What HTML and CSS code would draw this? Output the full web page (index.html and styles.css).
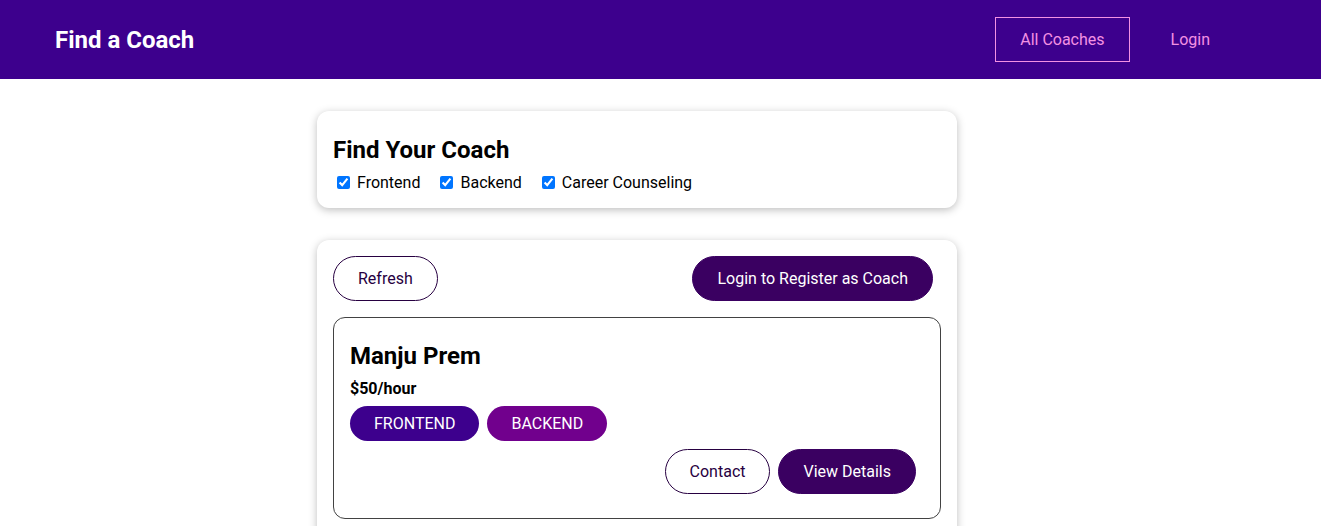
FILE: index.html
```html
<!DOCTYPE html>
<html lang="en">
<head>
<meta charset="utf-8">
<title>Find a Coach</title>
<link rel="stylesheet" href="styles.css">
</head>
<body>
<header class="site-header">
  <nav class="nav">
    <h1 class="brand"><a href="#" class="brand-link">Find a Coach</a></h1>
    <ul class="nav-list">
      <li class="nav-item"><a href="#" class="nav-link active">All Coaches</a></li>
      <li class="nav-item"><a href="#" class="nav-link">Login</a></li>
    </ul>
  </nav>
</header>
<main class="main">
  <section class="card">
    <h2 class="filter-title">Find Your Coach</h2>
    <span class="filter-option"><input type="checkbox" id="frontend" class="check" checked><label for="frontend" class="check-label">Frontend</label></span><span class="filter-option"><input type="checkbox" id="backend" class="check" checked><label for="backend" class="check-label">Backend</label></span><span class="filter-option"><input type="checkbox" id="career" class="check" checked><label for="career" class="check-label">Career Counseling</label></span>
  </section>
  <section class="card">
    <div class="controls">
      <button class="btn btn-outline">Refresh</button>
      <a href="#" class="btn">Login to Register as Coach</a>
    </div>
    <ul class="coach-list">
      <li class="coach">
        <h3 class="coach-name">Manju Prem</h3>
        <h4 class="coach-rate">$50/hour</h4>
        <div class="coach-badges"><span class="badge badge-frontend">FRONTEND</span><span class="badge badge-backend">BACKEND</span></div>
        <div class="coach-actions">
          <a href="#" class="btn btn-outline">Contact</a>
          <a href="#" class="btn">View Details</a>
        </div>
      </li>
    </ul>
  </section>
</main>
</body>
</html>
```
FILE: styles.css
```css
* {
  box-sizing: border-box;
}

html {
  font-family: Roboto, "Noto Sans", sans-serif;
}

body {
  margin: 0;
  font-size: 16px;
  color: #000;
}

.site-header {
  width: 100%;
  height: 79px;
  background-color: #3d008d;
  display: flex;
  align-items: center;
}

.nav {
  width: 1213px;
  margin: 0 78px 0 30px;
  display: flex;
  justify-content: space-between;
  align-items: center;
}

.brand {
  margin: 0;
  font-size: 24px;
  font-weight: 700;
}

.brand-link,
.nav-link {
  text-decoration: none;
  display: inline-block;
  padding: 12px 24px;
  border: 1px solid transparent;
}

.brand-link {
  color: #fff;
}

.nav-link {
  color: #f391e3;
}

.nav-link.active {
  border-color: #f391e3;
}

.nav-list {
  list-style: none;
  margin: 0;
  padding: 0;
  display: flex;
  align-items: center;
}

.nav-item {
  margin: 0 8px;
}

.main {
  padding-right: 47px;
}

.card {
  background: #fff;
  border-radius: 12px;
  box-shadow: 0 2px 8px rgba(0, 0, 0, 0.26);
  padding: 16px;
  margin: 32px auto;
  max-width: 640px;
}

.filter-title {
  margin: 8px 0;
  font-size: 24px;
  line-height: 29px;
  font-weight: 700;
  padding-top: 1px;
  margin-bottom: 7px;
}

.filter-option {
  margin-right: 16px;
}

.check,
.check-label {
  vertical-align: middle;
}

.check-label {
  margin-left: 4px;
}

.controls {
  display: flex;
  justify-content: space-between;
}

.btn {
  text-decoration: none;
  padding: 12px 24px;
  font: inherit;
  background-color: #3a0061;
  border: 1px solid #3a0061;
  color: #fff;
  cursor: pointer;
  border-radius: 30px;
  margin-right: 8px;
  display: inline-block;
  line-height: normal;
}

.btn-outline {
  background-color: transparent;
  border-color: #270041;
  color: #270041;
}

.coach-list {
  list-style: none;
  margin: 0;
  padding: 0;
}

.coach {
  margin: 16px 0;
  border: 1px solid #424242;
  border-radius: 12px;
  padding: 16px;
}

.coach-name {
  font-size: 24px;
  line-height: 29px;
  margin: 8px 0;
}

.coach-rate {
  font-size: 16px;
  margin: 8px 0;
}

.coach-badges {
  margin: 8px 0;
}

.coach-actions {
  margin: 8px 0;
  display: flex;
  justify-content: flex-end;
}

.badge {
  background-color: #ccc;
  color: #252525;
  border-radius: 30px;
  padding: 8px 24px;
  display: inline-block;
  margin-right: 8px;
}

.badge-frontend {
  background-color: #3d008d;
  color: #fff;
}

.badge-backend {
  background-color: #71008d;
  color: #fff;
}
```
